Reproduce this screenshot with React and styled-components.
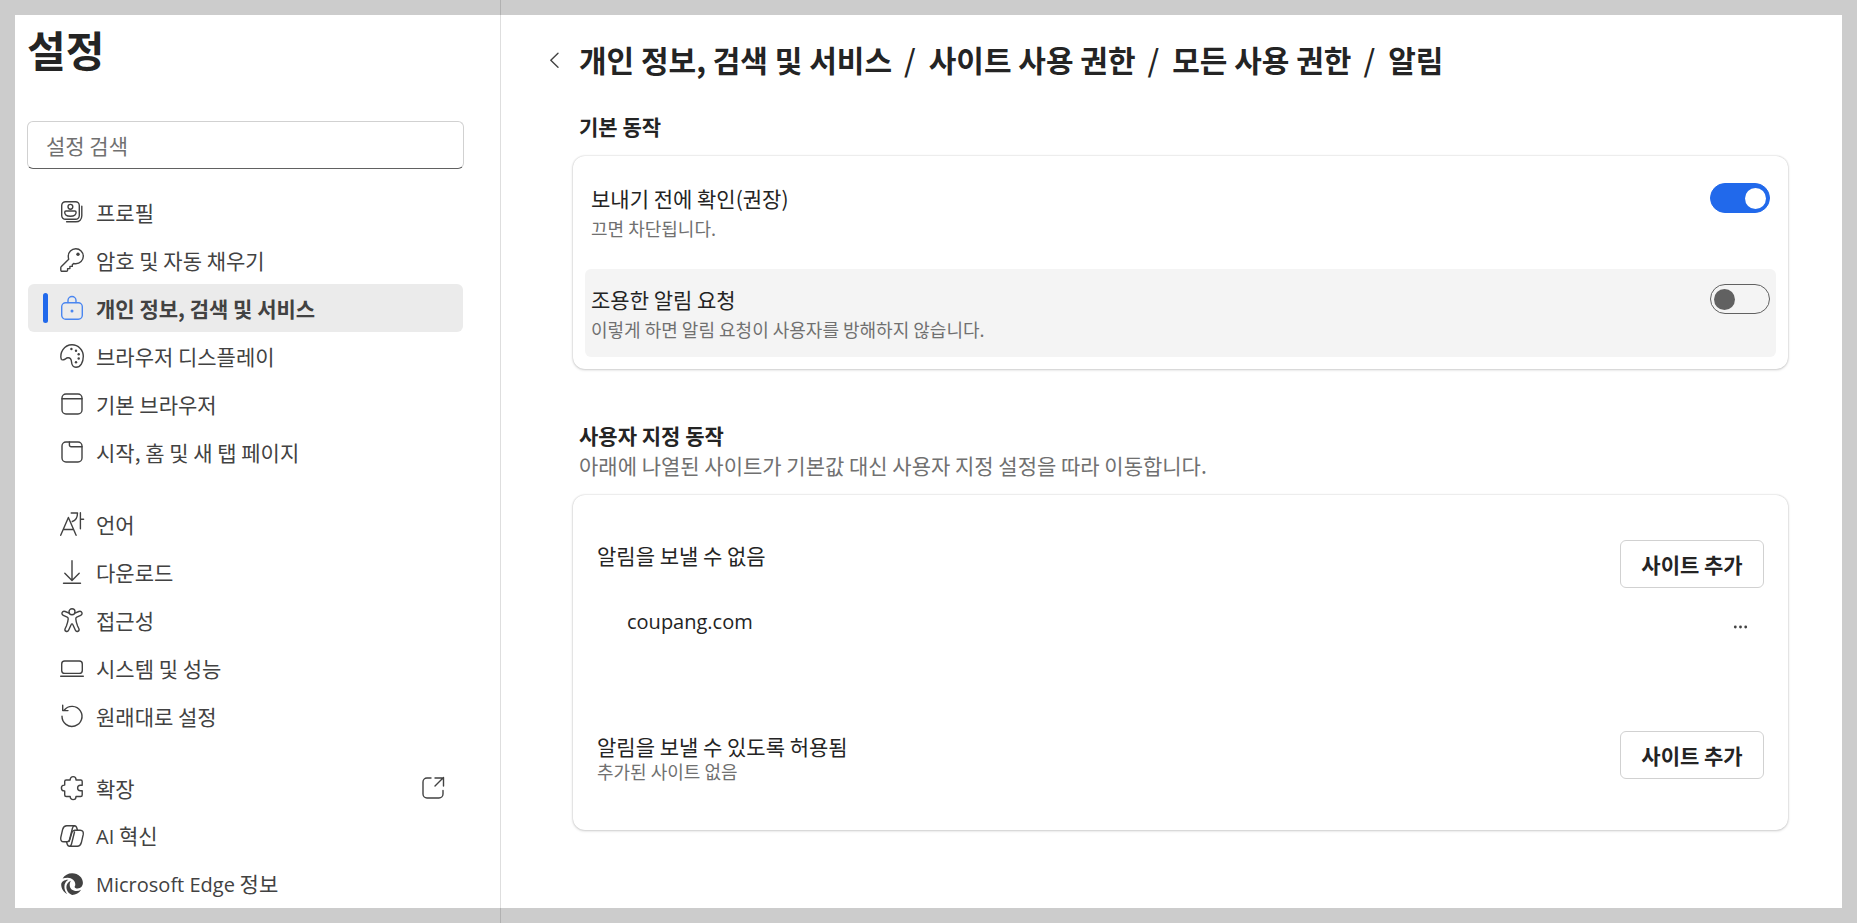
import React, { useState } from "react";
import styled, { createGlobalStyle, css } from "styled-components";

const GlobalStyle = createGlobalStyle`
  *, *::before, *::after { box-sizing: border-box; }
  body {
    margin: 0;
    background: #fff;
    color: #242424;
    font-family: "Noto Sans CJK KR", "Noto Sans", sans-serif;
    font-size: 21px;
    line-height: 30px;
  }
  h1, h2, p, ul, ol { margin: 0; padding: 0; }
  ul, ol { list-style: none; }
  button, input { font: inherit; color: inherit; }
`;

const Page = styled.div`
  display: flex;
  min-height: 100vh;
  &::after {
    content: "";
    position: fixed;
    inset: 0;
    border: 15px solid rgba(0, 0, 0, 0.2);
    pointer-events: none;
  }
`;

const Sidebar = styled.aside`
  flex: none;
  width: 501px;
  padding: 19px 36px 15px 27px;
  border-right: 1px solid #dedede;
`;

const PageTitle = styled.h1`
  font-size: 42px;
  font-weight: 700;
  line-height: 60px;
`;

const SearchBox = styled.input`
  display: block;
  width: 100%;
  height: 48px;
  margin: 42px 0 19px;
  padding: 0 18px;
  border: 1px solid #d1d1d1;
  border-bottom-color: #616161;
  border-radius: 6px;
  background: #fff;
  outline: none;
  &::placeholder { color: #707070; opacity: 1; }
`;

const Nav = styled.nav`
  display: flex;
  flex-direction: column;
  gap: 24px;
  margin: 0 1px;
`;

const NavLink = styled.a`
  display: flex;
  align-items: center;
  height: 48px;
  padding: 0 18px 0 15px;
  border-radius: 6px;
  color: #424242;
  text-decoration: none;
  &::before {
    content: "";
    width: 5px;
    height: 30px;
    margin-right: 12px;
    border-radius: 3px;
  }
  ${(p) => p.$active && css`
    background: #ebebeb;
    font-weight: 700;
    &::before { background: #2169eb; }
    svg { color: #4a86f0; }
  `}
`;

const NavText = styled.span`
  flex: 1;
  margin-left: 12px;
  padding-bottom: 1px;
`;

const Latin = styled.span`
  font-family: "Open Sans", "Noto Sans", sans-serif;
  font-size: 20px;
`;

const SiteName = styled(Latin)`
  line-height: 38px;
`;

const Svg = styled.svg`
  flex: none;
  width: 24px;
  height: 24px;
  fill: none;
  stroke: currentColor;
  stroke-width: 1.4;
  stroke-linecap: round;
  stroke-linejoin: round;
  overflow: visible;
`;

const Main = styled.main`
  flex: 1;
  min-width: 0;
  padding: 37px 69px 15px 72px;
`;

const Header = styled.header`
  display: flex;
  align-items: center;
  margin-left: -31px;
`;

const IconButton = styled.button`
  display: flex;
  align-items: center;
  justify-content: center;
  width: 24px;
  height: ${(p) => p.$height}px;
  padding: 0;
  border: 0;
  background: none;
  color: #424242;
`;

const Crumbs = styled.ol`
  display: flex;
  flex-wrap: wrap;
  margin-left: 13px;
  font-size: 30px;
  font-weight: 700;
  line-height: 45px;
`;

const Crumb = styled.li`
  & + &::before {
    content: "/";
    margin: 0 13px 0 12px;
    font-weight: 500;
  }
  a { color: inherit; text-decoration: none; }
`;

const SectionHead = styled.div`
  padding: 0 6px;
  margin: ${(p) => p.$top}px 0 15px;
`;

const SectionTitle = styled.h2`
  font-size: 21px;
  font-weight: 700;
`;

const SectionNote = styled.p`
  color: #707070;
`;

const Card = styled.section`
  display: flex;
  flex-direction: column;
  gap: ${(p) => p.$gap}px;
  padding: ${(p) => p.$pad};
  border-radius: 12px;
  background: #fff;
  box-shadow: 0 0 2px rgba(0, 0, 0, 0.2), 0 1px 3px rgba(0, 0, 0, 0.16);
`;

const SettingRow = styled.div`
  display: flex;
  align-items: flex-start;
  justify-content: space-between;
  padding: 15px 6px 13px;
  border-radius: 6px;
  background: ${(p) => (p.$shaded ? "#f4f4f4" : "transparent")};
`;

const Label = styled.label`
  display: block;
`;

const Hint = styled.p`
  color: #707070;
  font-size: 18px;
  line-height: ${(p) => (p.$tight ? 21 : 30)}px;
`;

const Switch = styled.input.attrs({ type: "checkbox", role: "switch" })`
  appearance: none;
  display: flex;
  align-items: center;
  flex: none;
  width: 60px;
  height: 30px;
  margin: 0;
  padding: 0 3px;
  border: 1px solid #616161;
  border-radius: 15px;
  background: transparent;
  &::before {
    content: "";
    width: 21px;
    height: 21px;
    border-radius: 50%;
    background: #616161;
  }
  &:checked {
    justify-content: flex-end;
    border-color: #2169eb;
    background: #2169eb;
  }
  &:checked::before { background: #fff; }
`;

const SiteGroup = styled.div`
  display: flex;
  flex-direction: column;
  gap: 15px;
`;

const SiteHeader = styled.div`
  display: flex;
  align-items: flex-start;
  justify-content: space-between;
`;

const SiteItem = styled.li`
  display: flex;
  align-items: flex-start;
  justify-content: space-between;
  padding: 0 11px 0 30px;
`;

const AddButton = styled.button`
  min-width: 144px;
  height: 48px;
  padding: 0 20px 1px;
  border: 1px solid #d1d1d1;
  border-radius: 6px;
  background: #fff;
  font-weight: 700;
`;

const dot = (cx, cy, r) => <circle key={`${cx}-${cy}`} cx={cx} cy={cy} r={r} fill="currentColor" stroke="none" />;

const icons = {
  profile: (
    <>
      <rect x="1.7" y="1.7" width="17.6" height="17.6" rx="3.8" />
      <circle cx="10.4" cy="6.8" r="2.4" />
      <path d="M6 11h8.8c.8 0 1.300.5 1.300 1.200 0 2.600-2.400 4-5.700 4s-5.700-1.400-5.700-4c0-.7.5-1.200 1.300-1.200z" />
      <path d="M21.800 6.200v9.600c0 3.600-2.400 6-6 6H6.600" />
    </>
  ),
  key: (
    <>
      <path d="M15.800.8a7.500 7.500 0 0 1 0 15c-.8 0-1.500-.1-2.200-.3L12.300 16.800v1.600h-2.400v2.200H7.600v1.600c0 .6-.5 1.100-1.100 1.100H2c-.7 0-1.200-.5-1.200-1.200v-2.300c0-.5.2-1 .6-1.300l7.300-7.300a7.500 7.500 0 0 1-.4-2.600A7.500 7.500 0 0 1 15.800.8z" />
      {dot(18, 6.2, 1.7)}
    </>
  ),
  lock: (
    <>
      <rect x="1.700" y="6.700" width="20.600" height="16.600" rx="4" />
      <path d="M8 6.500V4.500a4 4 0 0 1 8 0v2" />
      {dot(12, 15, 1.5)}
    </>
  ),
  palette: (
    <>
      <path d="M1.300 15.200C-.6 9 4 .8 12 .8c6.300 0 11.300 5.100 11.300 11.500 0 6-2.800 11-7.300 11-3 0-4.300-2.300-4.500-5.500-.2-2.500-1.300-4.200-3.600-4-2 .2-2.600 1.700-4.400 2-1 .2-1.900.1-2.200-.6z" />
      {[[11.4, 5], [16, 6.7], [18.7, 10.3], [18.7, 14.5], [16, 18.2]].map(([x, y]) => dot(x, y, 1.2))}
    </>
  ),
  browser: (
    <>
      <rect x="2" y="2" width="20" height="20" rx="4" />
      <path d="M2 6.700h20" />
    </>
  ),
  tab: (
    <>
      <rect x="2" y="2" width="20" height="20" rx="4" />
      <path d="M9.400 2v3a1.700 1.700 0 0 0 1.700 1.700H22" />
    </>
  ),
  language: (
    <path d="M.7 23.300 8.400 5.500l7.700 17.800M3.200 17.500h10.400M11.200 1h6.300c0 4.500-1.600 7.500-5.200 8.500M20.400.7v16M20.400 7.300h3.200" />
  ),
  download: <path d="M12 .7v19.500M4.800 13.200l7.200 7.200 7.200-7.200M3.500 23.300h17" />,
  accessibility: (
    <>
      <circle cx="12" cy="3.800" r="3" />
      <path d="M9.100 5.100 5.200 3.500C2.300 2.400.6 6 3.300 7.300l3.900 1.800c.8.400 1.100 1 1 1.900-.2 3-.8 4.500-1.800 7L5.100 20.700c-1 2.500 2.400 3.800 3.500 1.500l2.600-5.700c.3-.8 1.300-.8 1.600 0l2.600 5.700c1.100 2.300 4.500 1 3.500-1.500L17.600 18c-1-2.500-1.600-4-1.800-7-.1-.9.2-1.500 1-1.900l3.900-1.800c2.700-1.300 1-4.900-1.900-3.800l-3.900 1.600" />
    </>
  ),
  system: (
    <>
      <rect x="1.700" y="5" width="20.600" height="12.400" rx="3" />
      <path d="M.7 20.300h22.600" />
    </>
  ),
  reset: <path d="M2 12.300A10 10 0 1 0 4.300 6M2.700 1.300v5.300H8" />,
  extension: (
    <path d="M6.200 4H10.200V3.500a2.900 2.900 0 0 1 5.800 0V4H20.700a1.500 1.500 0 0 1 1.500 1.500V9.200h-1.800a2.800 2.800 0 0 0 0 5.600h1.800v4.200a1.500 1.500 0 0 1-1.500 1.500H16v.2a2.900 2.900 0 0 1-5.800 0v-.2H6.200a1.500 1.500 0 0 1-1.500-1.500V14.900H4.300a2.900 2.900 0 0 1 0-5.800h.4V5.500A1.500 1.500 0 0 1 6.200 4z" />
  ),
  copilot: (
    <>
      <path d="M6.700 1.800H14.500c1.700 0 2 1 2.500 2.700l.5 1.700H14.800c-1.600 0-2.400.8-2.800 2.200L9.700 15.800c-.4 1.400-1.200 2-2.400 2H3.800C1.300 17.800.3 15.900.8 13.300L2.700 5.200C3.400 2.800 4.700 1.800 6.700 1.800z" />
      <path d="M17.300 22.200H9.500C7.800 22.200 7.500 21.200 7 19.500l-.5-1.700M17.500 6.200h2.700c2.500 0 3.500 1.900 3 4.500L21.300 18.800c-.7 2.400-2 3.400-4 3.400M14.500 1.800c-1.200 0-1.700.8-2 2.200l-3.300 13M9.500 22.200c1.200 0 1.700-.8 2-2.200l3-12" />
    </>
  ),
  edge: (
    <g stroke="none" fill="currentColor">
      <path d="M2.600 6.500C4.600 3.200 8 1.200 12.200 1.200c6.200 0 10.700 4.500 10.700 9.600 0 3.400-2.300 5.700-5.300 5.700-1.800 0-3-.6-3-1.500 0-.7.7-1.100.7-2.600 0-3.600-3.400-6.600-7.600-6.600-1.900 0-3.600.200-5.100.7z" />
      <path d="M1.200 12.300c.1-2.400 2.800-4.700 7.200-4.600-2.700 1.500-4 4-4 7 0 2.600.9 5 2.800 7.200C3.500 20.300 1.100 16.600 1.200 12.300z" />
      <path d="M11 8.700c-1 1.400-1.300 2.900-1.300 4.300 0 3.700 2.900 6 6.900 6 1.600 0 3-.4 4.500-1.200-1.900 3.200-5.200 5.100-9 5.100-3.700-1.300-5.700-4.500-5.700-7.800 0-2.900 1.800-5.500 4.600-6.400z" />
    </g>
  ),
  external: <path d="M10 2H6a4 4 0 0 0-4 4v12a4 4 0 0 0 4 4h12a4 4 0 0 0 4-4v-3.500M14 2h8.500M22.500 1.500V10M22 2l-8 8" />,
  back: <path d="M16 5.200 8.800 12.200 16 19.200" />,
  more: <>{[6.3, 11.5, 16.7].map((x) => dot(x, 12, 1.4))}</>,
};

const Icon = ({ name }) => (
  <Svg viewBox="0 0 24 24" aria-hidden="true">{icons[name]}</Svg>
);

const groups = [
  [
    { icon: "profile", text: "프로필" },
    { icon: "key", text: "암호 및 자동 채우기" },
    { icon: "lock", text: "개인 정보, 검색 및 서비스", active: true },
    { icon: "palette", text: "브라우저 디스플레이" },
    { icon: "browser", text: "기본 브라우저" },
    { icon: "tab", text: "시작, 홈 및 새 탭 페이지" },
  ],
  [
    { icon: "language", text: "언어" },
    { icon: "download", text: "다운로드" },
    { icon: "accessibility", text: "접근성" },
    { icon: "system", text: "시스템 및 성능" },
    { icon: "reset", text: "원래대로 설정" },
  ],
  [
    { icon: "extension", text: "확장", external: true },
    { icon: "copilot", latin: "AI", text: " 혁신" },
    { icon: "edge", latin: "Microsoft Edge", text: " 정보" },
  ],
];

const crumbs = ["개인 정보, 검색 및 서비스", "사이트 사용 권한", "모든 사용 권한", "알림"];

function Setting({ id, title, hint, shaded, initial }) {
  const [on, setOn] = useState(initial);
  return (
    <SettingRow $shaded={shaded}>
      <div>
        <Label htmlFor={id}>{title}</Label>
        <Hint>{hint}</Hint>
      </div>
      <Switch id={id} checked={on} onChange={(e) => setOn(e.target.checked)} />
    </SettingRow>
  );
}

export default function App() {
  return (
    <>
      <GlobalStyle />
      <Page>
        <Sidebar>
          <PageTitle>설정</PageTitle>
          <SearchBox type="search" placeholder="설정 검색" aria-label="설정 검색" />
          <Nav>
            {groups.map((items, i) => (
              <ul key={i}>
                {items.map((item) => (
                  <li key={item.icon}>
                    <NavLink href="#" $active={item.active} aria-current={item.active ? "page" : undefined}>
                      <Icon name={item.icon} />
                      <NavText>
                        {item.latin && <Latin>{item.latin}</Latin>}
                        {item.text}
                      </NavText>
                      {item.external && <Icon name="external" />}
                    </NavLink>
                  </li>
                ))}
              </ul>
            ))}
          </Nav>
        </Sidebar>
        <Main>
          <Header>
            <IconButton $height={24} aria-label="뒤로"><Icon name="back" /></IconButton>
            <Crumbs>
              {crumbs.map((c, i) => (
                <Crumb key={c}>{i < crumbs.length - 1 ? <a href="#">{c}</a> : c}</Crumb>
              ))}
            </Crumbs>
          </Header>

          <SectionHead $top={29}>
            <SectionTitle>기본 동작</SectionTitle>
          </SectionHead>
          <Card $gap={13} $pad="12px">
            <Setting id="ask" title="보내기 전에 확인(권장)" hint="끄면 차단됩니다." initial={true} />
            <Setting id="quiet" title="조용한 알림 요청" hint="이렇게 하면 알림 요청이 사용자를 방해하지 않습니다." shaded initial={false} />
          </Card>

          <SectionHead $top={51}>
            <SectionTitle>사용자 지정 동작</SectionTitle>
            <SectionNote>아래에 나열된 사이트가 기본값 대신 사용자 지정 설정을 따라 이동합니다.</SectionNote>
          </SectionHead>
          <Card $gap={80} $pad="45px 24px 48px">
            <SiteGroup>
              <SiteHeader>
                <p>알림을 보낼 수 없음</p>
                <AddButton>사이트 추가</AddButton>
              </SiteHeader>
              <ul>
                <SiteItem>
                  <SiteName>coupang.com</SiteName>
                  <IconButton $height={48} aria-label="추가 작업"><Icon name="more" /></IconButton>
                </SiteItem>
              </ul>
            </SiteGroup>
            <SiteHeader>
              <div>
                <p>알림을 보낼 수 있도록 허용됨</p>
                <Hint $tight>추가된 사이트 없음</Hint>
              </div>
              <AddButton>사이트 추가</AddButton>
            </SiteHeader>
          </Card>
        </Main>
      </Page>
    </>
  );
}
